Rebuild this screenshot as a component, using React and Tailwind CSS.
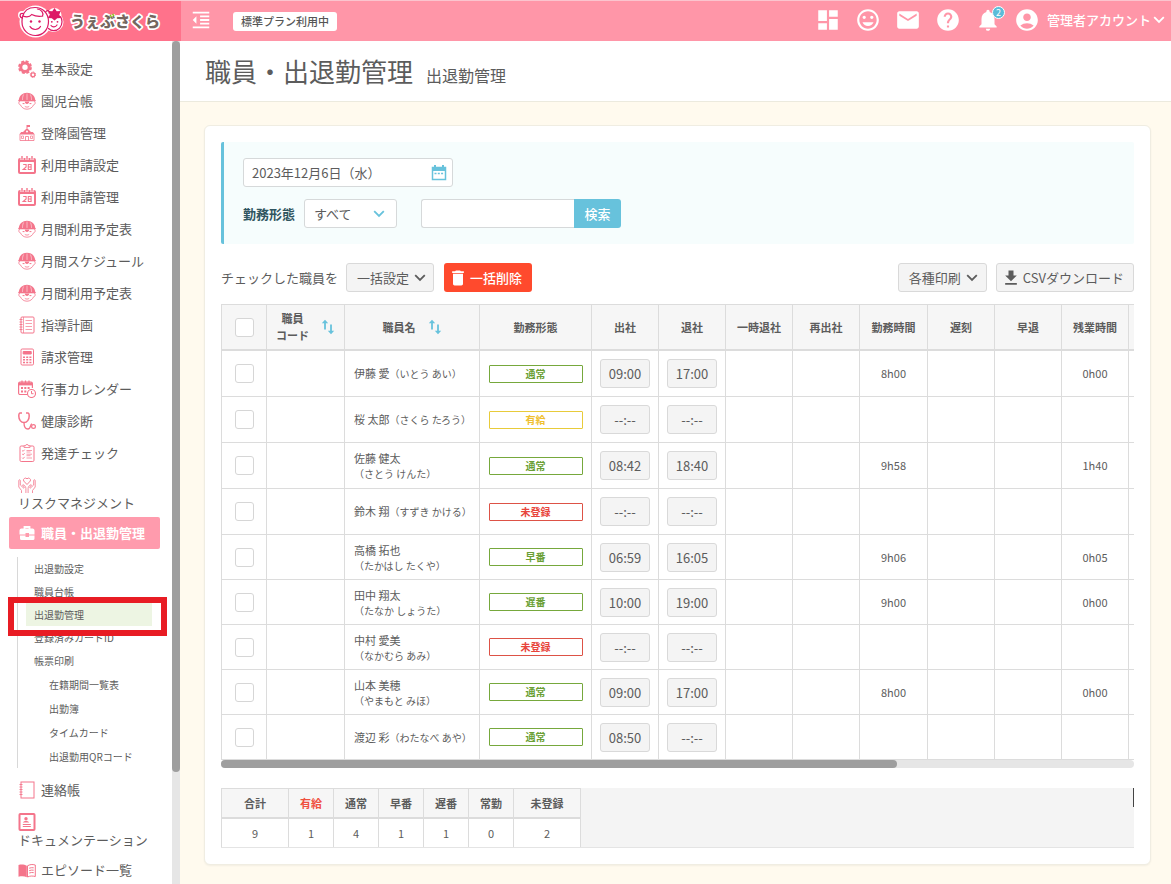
import React from "react";
import {
  MdDashboard,
  MdInsertEmoticon,
  MdEmail,
  MdHelp,
  MdNotifications,
  MdAccountCircle,
  MdFormatIndentDecrease,
  MdDelete,
  MdDownload,
} from "react-icons/md";

const PINK = "#f4758b";

function Icon({ children, w = 18, h = 18 }) {
  return (
    <svg width={w} height={h} viewBox="0 0 18 18" fill="none" stroke={PINK} strokeWidth="1" className="shrink-0" aria-hidden="true">
      {children}
    </svg>
  );
}

function Chevron({ className = "" }) {
  return (
    <svg width="12" height="8" viewBox="0 0 12 8" fill="none" stroke="currentColor" strokeWidth="1.8" className={"shrink-0 " + className} aria-hidden="true">
      <path d="M1.200 1.200L6 6l4.800-4.800" />
    </svg>
  );
}

const Gears = () => (
  <Icon>
    <circle cx="7" cy="7.200" r="4.200" strokeWidth="3" />
    <circle cx="7" cy="7.200" r="6" strokeWidth="1.800" strokeDasharray="3 1.710" />
    <circle cx="15" cy="14.700" r="1.900" strokeWidth="1.300" />
    <circle cx="15" cy="14.700" r="2.700" strokeWidth="1" strokeDasharray="1.300 .8" />
  </Icon>
);
const Child = () => (
  <Icon>
    <path d="M.8 8.200C1.200 3.600 4.600.8 9 .8s7.800 2.800 8.200 7.400z" fill={PINK} stroke="none" />
    <path d="M9 1.500v6.500M5.600 2.500C4.600 4.500 4.500 6 4.500 8M12.400 2.500c1 2 1.100 3.500 1.100 5.500" stroke="#fff" strokeWidth=".5" />
    <path d="M.3 8.600h17.400" strokeWidth="1.400" />
    <path d="M2 9.400C.4 9.400.4 12.600 2.400 12.800 3.500 15.500 6 17.200 9 17.200s5.500-1.700 6.600-4.400c2-.2 2-3.400.4-3.400" strokeWidth=".8" />
    <path d="M4.600 11.600h1.900M11.500 11.600h1.900" />
    <path d="M6.800 9.600h4.400c0 1.600-1 2.500-2.200 2.500s-2.200-.9-2.200-2.500z" fill={PINK} stroke="none" />
    <path d="M6.800 14.400c1.300.9 3.100.9 4.400 0" strokeWidth=".8" />
  </Icon>
);
const School = () => (
  <Icon>
    <path d="M9 1v3" />
    <path d="M9 1h3v2H9z" fill={PINK} stroke="none" />
    <path d="M4.500 8.500L9 4l4.500 4.500zM1.200 10.500l2-2.500h11.600l2 2.500z" fill={PINK} stroke="none" />
    <path d="M2 10.500v6h14v-6M7.500 16.500v-4h3v4" strokeWidth=".8" />
    <path d="M3.500 12h2v2.500h-2zM12.500 12h2v2.500h-2z" strokeWidth=".7" />
    <circle cx="9" cy="7.500" r="1" fill="#fff" stroke="none" />
  </Icon>
);
const Cal28 = () => (
  <Icon>
    <rect x="0" y="2" width="18" height="16" rx="2" fill={PINK} stroke="none" />
    <path d="M4 0v4M9 0v4M14 0v4" stroke="#fff" strokeWidth="3" />
    <path d="M4 .2v3M14 .2v3M9 .2v3" strokeWidth="1.400" strokeLinecap="round" />
    <rect x="2" y="6" width="14" height="10" rx=".6" fill="#fff" stroke="none" />
    <path d="M5.200 8.500h2.900v2.500L5.200 13.500h3.200M10.300 8.500h2.800v5h-2.800zM10.300 11h2.800" strokeWidth="1.100" />
  </Icon>
);
const Notebook = ({ plain }) => (
  <Icon>
    <rect x="3" y="1" width="13" height="16" rx={plain ? 0 : 1} />
    <path d="M1.500 3.500h3M1.500 6h3M1.500 8.500h3M1.500 11h3M1.500 13.500h3" strokeWidth=".9" />
    {!plain && <path d="M5.500 1v16M7.500 4.500h6.500M7.500 7.500h6.500M7.500 10.500h6.500M7.500 13.500h6.500" strokeWidth=".7" />}
  </Icon>
);
const Calc = () => (
  <Icon>
    <rect x="3" y="1" width="12.500" height="16" rx="1.200" />
    <path d="M5.200 3.500h8v2.500h-8z" fill={PINK} />
    <path d="M5 9.200h9M5 11.800h9M5 14.500h9" strokeWidth="1.600" strokeDasharray="2 1.200" />
  </Icon>
);
const CalClock = () => (
  <Icon>
    <path d="M9.500 14.500H2a1.400 1.400 0 0 1-1.400-1.400V3.500A1.400 1.400 0 0 1 2 2.200h11a1.400 1.400 0 0 1 1.400 1.300V8" strokeWidth="1.200" />
    <path d="M.8 2.800h13.400v2.600H.8z" fill={PINK} stroke="none" />
    <path d="M4 .4v3M7.500 .4v3M11 .4v3" strokeWidth="1.200" />
    <path d="M3 8h9M3 11.500h5.500" strokeWidth="1.900" strokeDasharray="2 1.300" />
    <circle cx="13.500" cy="13.500" r="4" strokeWidth="1.100" />
    <path d="M13.500 11v2.700h2" />
  </Icon>
);
const Steth = () => (
  <Icon>
    <path d="M4 .9H2.200C1 .9.8 2.500.8 4c0 3.500 2 6.600 5.200 6.600s5.200-3.100 5.200-6.600c0-1.500-.2-3.100-1.400-3.100H8" strokeWidth="1.500" />
    <path d="M6 10.500c0 3.500 1.200 6.500 4 6.500 3.200 0 1.800-5 4-5.200" strokeWidth="1.300" />
    <circle cx="15.500" cy="14.500" r="1.900" strokeWidth="1.200" />
  </Icon>
);
const Checklist = () => (
  <Icon>
    <rect x="2" y="2" width="14" height="15.500" rx="1.200" />
    <path d="M6 3.500V1.800h1.600a1.400 1.400 0 0 1 2.800 0H12v1.700z" fill="#fff" strokeWidth=".8" />
    <path d="M4.200 6.500l.9.900 1.500-1.700M4.200 10l.9.900 1.500-1.700M4.200 13.700l.9.900 1.500-1.700" strokeWidth=".9" />
    <path d="M8.500 6.500h5.500M8.500 8h4M8.500 10.200h5.500M8.500 11.700h4M8.500 14h5.500" strokeWidth=".7" />
  </Icon>
);
const HandsHeart = () => (
  <Icon>
    <path d="M9 8.500L5.700 5a2 2 0 0 1 3.300-2.200A2 2 0 0 1 12.300 5z" strokeWidth=".9" />
    <path d="M3.500 17v-2.500L.8 11V4.500c0-1 1.500-1 1.500 0V9l3.500 3.200c.9-.6.300-1.400-1.300-3.200 1.200-1 3.400 1.500 3.400 3.500V17M14.500 17v-2.500l2.700-3.500V4.500c0-1-1.500-1-1.500 0V9l-3.500 3.200c-.9-.6-.3-1.400 1.300-3.200-1.200-1-3.400 1.500-3.400 3.500V17" strokeWidth=".8" />
  </Icon>
);
const Badge = () => (
  <Icon>
    <rect x="1.500" y="1" width="15" height="16" rx=".8" strokeWidth="2" />
    <circle cx="8" cy="5.700" r="1.700" fill={PINK} stroke="none" />
    <path d="M4.800 9.600c.4-2.200 6-2.200 6.400 0z" fill={PINK} stroke="none" />
    <path d="M4.800 11.500h8M4.800 13.500h8" />
  </Icon>
);
const Book = () => (
  <Icon>
    <path d="M.5 4c3-.9 6-.5 8.300.8v11.400C6.500 15 3.500 15 .5 15.700z" fill={PINK} stroke="none" />
    <path d="M17.300 4c-3-.9-5.500-.5-7.800.8v11.200c2.300-1.200 5-1.200 7.800-.5z" />
    <path d="M11.200 7.200c1.500-.6 3-.6 4.500-.4M11.200 9.600c1.500-.6 3-.6 4.500-.4M11.200 12c1.500-.6 3-.6 4.500-.4" />
  </Icon>
);
const MedBag = () => (
  <svg width="18" height="18" viewBox="0 0 18 18" className="shrink-0" aria-hidden="true">
    <path d="M6.500 5V3h5v2" fill="none" stroke="#fff" strokeWidth="1.800" />
    <path d="M3.500 4.500h11a2 2 0 0 1 2 2V10.500h-5.500V9H7.500v1.500H1.500V6.500a2 2 0 0 1 2-2zM2 11.500h5.500V13H11v-1.500h5.500v3a1.500 1.500 0 0 1-1.500 1.500h-11.500A1.500 1.500 0 0 1 2 14.500z" fill="#fff" />
  </svg>
);

const MENU = [
  ["基本設定", Gears],
  ["園児台帳", Child],
  ["登降園管理", School],
  ["利用申請設定", Cal28],
  ["利用申請管理", Cal28],
  ["月間利用予定表", Child],
  ["月間スケジュール", Child],
  ["月間利用予定表", Child],
  ["指導計画", Notebook],
  ["請求管理", Calc],
  ["行事カレンダー", CalClock],
  ["健康診断", Steth],
  ["発達チェック", Checklist],
];

function MenuItem({ label, icon: I, plain }) {
  return (
    <li>
      <a href="#" className="flex h-8 items-center gap-[5px] pl-[18px]">
        <I plain={plain} />
        {label}
      </a>
    </li>
  );
}

function StackedItem({ label, icon: I }) {
  return (
    <li>
      <a href="#" className="flex h-12 flex-col pt-[7px] pl-[18px] leading-[17px]">
        <I />
        <span>{label}</span>
      </a>
    </li>
  );
}

function Logo() {
  return (
    <a href="#" className="flex items-center gap-[5px]" aria-label="うぇぶさくら">
      <svg width="46" height="34" viewBox="0 0 46 34" fill="none" aria-hidden="true">
        <circle cx="17.500" cy="17.500" r="16" fill="#fff" />
        <circle cx="35.500" cy="18" r="10" fill="#fff" />
        <circle cx="4" cy="11" r="4" fill="#fff" />
        <circle cx="36.500" cy="11" r="7" fill="#fff" />
        <g stroke="#dd1a66" strokeWidth="1.200" strokeLinecap="round">
          <path d="M4.500 13C6 6.500 11 3.500 17 3.500c8 0 13.500 6 13.500 14S25 31.500 17.500 31.500 4 25.500 4 18c0-2 0-3.500.5-5z" />
          <path d="M4.500 14c-3.500-1-3-5 .2-4.500M28 7.500c1.500-2 4-.5 3 1.500" />
          <path d="M4.700 12c4 1.500 7.500.5 9-1.500 2 1 5 2.500 11 1.500M24.500 12c1.500-3-1-6.500-5-7" />
          <path d="M30.500 24.500c1.500 1.500 3 2.200 5 2.200 5 0 8.500-4 8.500-9 0-1.800-.5-3.500-1.500-5" />
          <path d="M12 22.500c2.500 4 8 4 10.500 0M33 21.500c1.500 2 4.500 1.800 6-.5" />
        </g>
        <g fill="#dd1a66">
          <circle cx="13" cy="17.500" r="1.200" />
          <circle cx="21.500" cy="17.500" r="1.200" />
          <circle cx="33.800" cy="17.800" r=".9" />
          <circle cx="39.500" cy="17.800" r=".9" />
          <path d="M36.500 4l2.200 3.200 4-.3-1.500 3.800 2 3.300-4 .2-2.700 2.300-2.700-2.300-4-.2 2-3.300-1.500-3.800 4 .3z" />
        </g>
      </svg>
      <svg width="94" height="24" viewBox="0 0 94 24" aria-hidden="true">
        <text
          x="1"
          y="18"
          fontSize="15"
          fontWeight="900"
          fontFamily="'Noto Sans CJK JP', sans-serif"
          fill="#75675f"
          stroke="#fff"
          strokeWidth="3.500"
          strokeLinejoin="round"
          paintOrder="stroke"
        >
          うぇぶさくら
        </text>
        <path d="M41 6l1.500 2M43.500 5l1.500 2" stroke="#8fc31f" strokeWidth="1.500" />
      </svg>
    </a>
  );
}

const ROWS = [
  ["伊藤 愛", "（いとう あい）", "通常", "09:00", "17:00", "8h00", "0h00"],
  ["桜 太郎", "（さくら たろう）", "有給", "--:--", "--:--", "", ""],
  ["佐藤 健太", "（さとう けんた）", "通常", "08:42", "18:40", "9h58", "1h40"],
  ["鈴木 翔", "（すずき かける）", "未登録", "--:--", "--:--", "", ""],
  ["高橋 拓也", "（たかはし たくや）", "早番", "06:59", "16:05", "9h06", "0h05"],
  ["田中 翔太", "（たなか しょうた）", "遅番", "10:00", "19:00", "9h00", "0h00"],
  ["中村 愛美", "（なかむら あみ）", "未登録", "--:--", "--:--", "", ""],
  ["山本 美穂", "（やまもと みほ）", "通常", "09:00", "17:00", "8h00", "0h00"],
  ["渡辺 彩", "（わたなべ あや）", "通常", "08:50", "--:--", "", ""],
];

const TONE = {
  有給: "border-[#e8cb3a] text-[#efc02e]",
  未登録: "border-[#dd5246] text-[#e8453c]",
};

const check =
  "block size-[19px] mx-auto appearance-none rounded-[3px] border border-[#d6d6d6] bg-white checked:bg-[#67c2dc]";
const btn = "flex h-[29px] items-center rounded-[3px] border border-[#d9d9d9] bg-[#f4f4f4] text-[13px]";
const th = "border-r border-[#dcdcdc] p-0 text-center font-bold";
const td = "border-r border-b border-[#dcdcdc] p-0 text-center";

function Row({ r, index }) {
  const [name, kana, status, start, end, work, over] = r;
  const stacked = name.length > 4;
  return (
    <tr className={index < 4 ? "h-[46px]" : "h-[45px]"}>
      <td className={td}>
        <input type="checkbox" aria-label={name} className={check} />
      </td>
      <td className={td}></td>
      <td className="border-r border-b border-[#dcdcdc] p-0 pl-[9px] text-left text-[11px] leading-[16px] whitespace-nowrap">
        {name}
        <span className={stacked ? "block text-[10px] leading-[15px]" : "text-[10px]"}>{kana}</span>
      </td>
      <td className={td}>
        <button
          className={
            "mx-auto block h-[18px] w-[94px] rounded-[1px] border bg-white text-[10px] leading-[16px] font-bold " +
            (TONE[status] || "border-[#76a83c] text-[#6b9f35]")
          }
        >
          {status}
        </button>
      </td>
      {[start, end].map((t, i) => (
        <td key={i} className={td}>
          <input
            defaultValue={t}
            aria-label={name + (i ? " 退社" : " 出社")}
            className="mx-auto block h-[29px] w-[50px] rounded-[3px] border border-[#d9d9d9] bg-[#f4f4f4] p-0 text-center text-[13px]"
          />
        </td>
      ))}
      <td className={td}></td>
      <td className={td}></td>
      <td className={td}>{work}</td>
      <td className={td}></td>
      <td className={td}></td>
      <td className={td}>{over}</td>
      <td className={td}></td>
    </tr>
  );
}

const Sort = () => (
  <button aria-label="並び替え" className="text-[#67c2dc]">
    <svg width="14" height="16" viewBox="0 0 14 16" fill="currentColor" aria-hidden="true">
      <path d="M4 .8L7.200 4.200H4.900v6.300H3.100V4.200H.8zM10 15.200L6.800 11.800h2.300V5.500h1.800v6.300h2.300z" />
    </svg>
  </button>
);

const SUB = ["出退勤設定", "職員台帳", "出退勤管理", "登録済みカードID", "帳票印刷"];
const SUB2 = ["在籍期間一覧表", "出勤簿", "タイムカード", "出退勤用QRコード"];

const TOTALS = [
  ["合計", 9],
  ["有給", 1],
  ["通常", 4],
  ["早番", 1],
  ["遅番", 1],
  ["常勤", 0],
  ["未登録", 2],
];

export default function App() {
  return (
    <div className="flex h-screen flex-col overflow-hidden bg-[#fffaee] font-['Noto_Sans_CJK_JP',sans-serif] text-[#5c5c5c]">
      <header className="flex h-[41px] shrink-0 border-t border-[#fbc4ce] bg-[#ff96a8] text-white">
        <div className="flex w-[181px] shrink-0 items-center bg-[#ff728b] pl-[18px]">
          <Logo />
        </div>
        <button aria-label="メニューを閉じる" className="ml-[9px] pb-[2px]">
          <MdFormatIndentDecrease size={22} />
        </button>
        <span className="ml-[21px] h-[19px] self-center rounded-[3px] bg-white px-2 text-[11px] leading-[19px] font-medium text-[#555]">
          標準プラン利用中
        </span>
        <nav className="ml-auto flex items-center gap-[14px] pr-[6px] pb-[2px]">
          <a href="#" aria-label="ダッシュボード"><MdDashboard size={26} /></a>
          <a href="#" aria-label="園児"><MdInsertEmoticon size={26} /></a>
          <a href="#" aria-label="メール"><MdEmail size={26} /></a>
          <a href="#" aria-label="ヘルプ"><MdHelp size={26} /></a>
          <a href="#" aria-label="お知らせ" className="relative">
            <MdNotifications size={26} />
            <span className="absolute -top-px -right-1 flex size-[13px] items-center justify-center rounded-full border border-white bg-[#5bbcd8] text-[9px] leading-none">
              2
            </span>
          </a>
          <button className="-ml-px flex items-center text-[13px] font-medium">
            <MdAccountCircle size={26} />
            <span className="ml-[7px]">管理者アカウント</span>
            <Chevron className="ml-[2px]" />
          </button>
        </nav>
      </header>

      <div className="flex min-h-0 flex-1">
        <aside className="flex w-[180px] shrink-0 overflow-hidden bg-white">
          <div className="w-[172px] pt-3 text-[13px] whitespace-nowrap">
            <ul>
              {MENU.map(([l, i], k) => (
                <MenuItem key={k} label={l} icon={i} />
              ))}
              <StackedItem label="リスクマネジメント" icon={HandsHeart} />
              <li>
                <a href="#" className="mr-3 ml-[9px] flex h-8 items-center gap-[5px] rounded-[2px] bg-[#ff9bad] pl-[9px] font-bold text-white">
                  <MedBag />
                  職員・出退勤管理
                </a>
                <ul className="mt-2 mb-[6px] ml-[17px] border-l border-[#d8d8d8] text-[10px]">
                  {SUB.map((s) => (
                    <li key={s} className="relative pr-5 pl-2">
                      <a
                        href="#"
                        className={"flex h-[23px] items-center pl-2 " + (s === "出退勤管理" ? "bg-[#edf5e3]" : "")}
                      >
                        {s}
                      </a>
                      {s === "出退勤管理" && (
                        <span className="absolute -top-[6px] -left-[10px] z-10 h-[39px] w-[159px] border-[6px] border-[#e81c24]"></span>
                      )}
                    </li>
                  ))}
                  {SUB2.map((s) => (
                    <li key={s}>
                      <a href="#" className="flex h-6 items-center pl-[31px]">{s}</a>
                    </li>
                  ))}
                </ul>
              </li>
              <MenuItem label="連絡帳" icon={Notebook} plain />
              <StackedItem label="ドキュメンテーション" icon={Badge} />
              <MenuItem label="エピソード一覧" icon={Book} />
            </ul>
          </div>
          <div className="w-2 bg-[#e6e6e6]">
            <div className="h-[731px] rounded-full bg-[#9e9e9e]"></div>
          </div>
        </aside>

        <main className="min-w-0 flex-1">
          <div className="flex h-[61px] items-center gap-[13px] border-b border-[#eceade] bg-white pl-[25px]">
            <h1 className="text-[26px] leading-none">職員・出退勤管理</h1>
            <span className="pt-[7px] text-[16px] leading-none">出退勤管理</span>
          </div>

          <section className="mt-[23px] mr-[20px] ml-6 rounded-[6px] border border-[#f0ede2] bg-white p-4 shadow-xs">
            <form className="rounded-[2px] border-l-[3px] border-[#67c2dc] bg-[#f6fdfd] px-[19px] py-4" onSubmit={(e) => e.preventDefault()}>
              <div className="flex h-[29px] w-[210px] items-center rounded-[3px] border border-[#d6d9da] bg-white pr-[5px] pl-2">
                <input aria-label="日付" defaultValue="2023年12月6日（水）" className="min-w-0 flex-1 text-[13px]" />
                <svg width="16" height="16" viewBox="0 0 16 16" fill="none" aria-hidden="true">
                  <path d="M1.500 2.500h13v12h-13z" stroke="#67c2dc" strokeWidth="1.500" />
                  <path d="M1 2h14v4H1zM3 0h2v3H3zM11 0h2v3h-2z" fill="#67c2dc" />
                  <path d="M3.500 8.500h9" stroke="#67c2dc" strokeWidth="1.300" strokeDasharray="2 1.300" />
                </svg>
              </div>
              <div className="mt-3 flex items-center">
                <label htmlFor="type" className="text-[13px] font-bold text-[#2f5560]">勤務形態</label>
                <div className="relative ml-[9px]">
                  <select id="type" className="h-[29px] w-[93px] appearance-none rounded-[3px] border border-[#d6d9da] bg-white pl-[9px] text-[13px]">
                    <option>すべて</option>
                  </select>
                  <Chevron className="pointer-events-none absolute top-[11px] right-[12px] text-[#67c2dc]" />
                </div>
                <input aria-label="検索語" className="ml-6 h-[29px] w-[153px] rounded-l-[3px] border border-r-0 border-[#d6d9da] bg-white px-2 text-[13px]" />
                <button className="h-[29px] w-[47px] rounded-r-[3px] bg-[#67c2dc] text-[13px] font-medium text-white">検索</button>
              </div>
            </form>

            <div className="mt-[19px] mb-3 flex items-center">
              <span className="text-[13px]">チェックした職員を</span>
              <button className={btn + " ml-[8px] gap-[5px] pr-[7px] pl-[10px]"}>
                一括設定
                <Chevron />
              </button>
              <button className="ml-[10px] flex h-[29px] items-center gap-[2px] rounded-[3px] bg-[#ff4a2d] pr-[10px] pl-1 text-[13px] font-medium text-white">
                <MdDelete size={20} />
                一括削除
              </button>
              <button className={btn + " ml-auto gap-[5px] pr-[8px] pl-[10px]"}>
                各種印刷
                <Chevron />
              </button>
              <button className={btn + " ml-[9px] gap-[2px] pr-[9px] pl-1"}>
                <MdDownload size={20} />
                CSVダウンロード
              </button>
            </div>

            <div className="overflow-hidden">
              <table className="w-[1224px] table-fixed border-separate border-spacing-0 border-t border-l border-[#dcdcdc] text-[11px]">
                <colgroup>
                  <col className="w-[45px]" />
                  <col className="w-[78px]" />
                  <col className="w-[135px]" />
                  <col className="w-[112px]" />
                  <col className="w-[67px]" />
                  <col className="w-[67px]" />
                  <col className="w-[67px]" />
                  <col className="w-[67px]" />
                  <col className="w-[68px]" />
                  <col className="w-[67px]" />
                  <col className="w-[67px]" />
                  <col className="w-[67px]" />
                  <col />
                </colgroup>
                <thead>
                  <tr className="h-[46px] bg-[#f6f6f6] [&>th]:border-b-2">
                    <th className={th}><input type="checkbox" aria-label="すべて選択" className={check} /></th>
                    <th className={th}>
                      <div className="flex items-center justify-center gap-[12px] leading-[17px]">
                        <span>職員<br />コード</span>
                        <Sort />
                      </div>
                    </th>
                    <th className={th}>
                      <div className="flex items-center justify-center gap-[12px]">
                        職員名
                        <Sort />
                      </div>
                    </th>
                    {["勤務形態", "出社", "退社", "一時退社", "再出社", "勤務時間", "遅刻", "早退", "残業時間", ""].map((h) => (
                      <th key={h} className={th}>{h}</th>
                    ))}
                  </tr>
                </thead>
                <tbody>
                  {ROWS.map((r, i) => (
                    <Row key={i} r={r} index={i} />
                  ))}
                </tbody>
              </table>
            </div>
            <div className="h-2 rounded-full bg-[#e6e6e6]">
              <div className="h-2 w-[74%] rounded-full bg-[#9e9e9e]"></div>
            </div>

            <div className="mt-5 flex border-b border-[#e4e4e4] bg-[#f4f4f4]">
              <table className="table-fixed border-separate border-spacing-0 border-t border-l border-[#dcdcdc] text-[11px]">
                <thead>
                  <tr className="h-[30px] bg-[#f6f6f6]">
                    {TOTALS.map(([l]) => (
                      <th
                        key={l}
                        className={
                          "border-r border-b-2 border-[#dcdcdc] p-0 text-center font-bold " +
                          (l === "合計" || l === "未登録" ? "w-[67px] " : "w-[45px] ") +
                          (l === "有給" ? "text-[#f0503f]" : "")
                        }
                      >
                        {l}
                      </th>
                    ))}
                  </tr>
                </thead>
                <tbody>
                  <tr className="h-7 bg-white">
                    {TOTALS.map(([l, n]) => (
                      <td key={l} className="border-r border-[#dcdcdc] p-0 text-center">{n}</td>
                    ))}
                  </tr>
                </tbody>
              </table>
              <div className="ml-auto h-[19px] w-px bg-[#444]"></div>
            </div>
          </section>
        </main>
      </div>
    </div>
  );
}
